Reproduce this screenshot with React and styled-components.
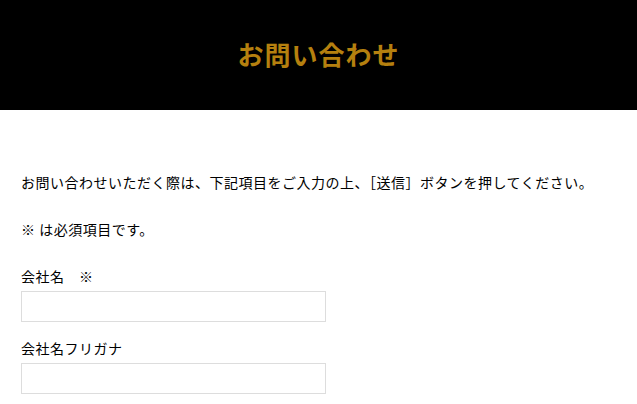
import React from 'react';
import styled, { createGlobalStyle } from 'styled-components';

const Global = createGlobalStyle`
  body {
    margin: 0;
    background: #fff;
    font-family: "Noto Sans CJK JP", "Noto Sans", sans-serif;
    color: #000;
  }
`;

const Header = styled.header`
  height: 110px;
  box-sizing: border-box;
  padding-bottom: 4px;
  background: #000;
  display: flex;
  align-items: center;
  justify-content: center;
`;

const Title = styled.h1`
  margin: 0;
  font-size: 26px;
  font-weight: 700;
  color: #b5800f;
  letter-spacing: 1px;
`;

const Content = styled.main`
  padding: 62px 21px 0;
`;

const Lead = styled.p`
  margin: 0 0 26px;
  font-size: 14px;
  line-height: 21px;
  letter-spacing: 0.5px;
`;

const Field = styled.div`
  display: flex;
  flex-direction: column;
  margin-bottom: 16px;
`;

const Label = styled.label`
  font-size: 14px;
  line-height: 21px;
  letter-spacing: 0.5px;
  margin-bottom: 4px;
`;

const Input = styled.input`
  width: 305px;
  height: 31px;
  box-sizing: border-box;
  border: 1px solid #ddd;
  background: #fff;
  outline: none;
`;

const App = () => (
  <>
    <Global />
    <Header>
      <Title>お問い合わせ</Title>
    </Header>
    <Content>
      <Lead>お問い合わせいただく際は、下記項目をご入力の上、［送信］ボタンを押してください。</Lead>
      <Lead>※ は必須項目です。</Lead>
      <Field>
        <Label>会社名　※</Label>
        <Input type="text" />
      </Field>
      <Field>
        <Label>会社名フリガナ</Label>
        <Input type="text" />
      </Field>
    </Content>
  </>
);

export default App;
